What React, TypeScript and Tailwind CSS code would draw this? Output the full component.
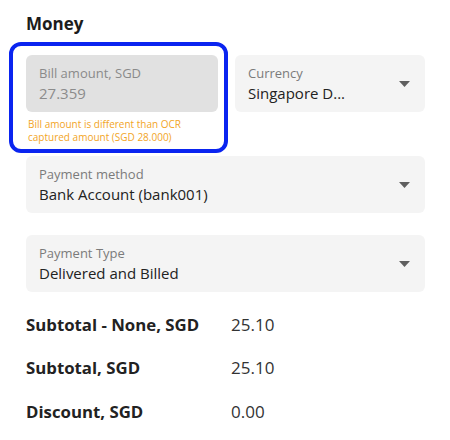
import React from 'react';

const font = { fontFamily: '"Open Sans", "Noto Sans", sans-serif' };

function Caret() {
  return (
    <svg width="11" height="6" viewBox="0 0 11 6" className="shrink-0">
      <path d="M0 0 L11 0 L5.5 6 Z" fill="#5f5f5f" />
    </svg>
  );
}

function SelectField({ label, value }: { label: string; value: string }) {
  return (
    <div className="flex items-center justify-between rounded-md bg-[#f4f4f4] pl-[13px] pr-[15px] h-[57px]">
      <div className="flex flex-col min-w-0">
        <span className="text-[13px] leading-[18px] text-[#7b7b7b]">{label}</span>
        <span className="text-[15px] leading-[22px] text-[#222222] truncate">{value}</span>
      </div>
      <Caret />
    </div>
  );
}

const totals = [
  { label: 'Subtotal - None, SGD', value: '25.10' },
  { label: 'Subtotal, SGD', value: '25.10' },
  { label: 'Discount, SGD', value: '0.00' },
];

export default function App() {
  return (
    <div className="w-[450px] h-[440px] bg-white overflow-hidden pt-[13px] pl-[26px] pr-[25px]" style={font}>
      <h2 className="text-[17px] leading-[22px] font-bold text-[#1c1c1c]">Money</h2>

      {/* Bill amount + currency */}
      <div className="grid grid-cols-[192px_190px] gap-x-[17px] mt-[20px]">
        <div className="relative">
          <div className="rounded-md bg-[#e1e1e1] pl-[13px] h-[57px] flex flex-col justify-center">
            <span className="text-[13px] leading-[18px] text-[#8a8a8a]">Bill amount, SGD</span>
            <span className="text-[15px] leading-[22px] text-[#8c8c8c]">27.359</span>
          </div>
          <p className="mt-[6px] pl-[2px] text-[10px] leading-[13px] text-[#f2a51f]">
            Bill amount is different than OCR captured amount (SGD 28.000)
          </p>
          {/* highlight annotation */}
          <div className="absolute left-[-17px] top-[-13px] w-[219px] h-[111px] rounded-[12px] border-4 border-[#0a24f0] pointer-events-none" />
        </div>
        <SelectField label="Currency" value="Singapore D..." />
      </div>

      <div className="mt-[12px]">
        <SelectField label="Payment method" value="Bank Account (bank001)" />
      </div>
      <div className="mt-[22px]">
        <SelectField label="Payment Type" value="Delivered and Billed" />
      </div>

      {/* Totals */}
      <div className="mt-[21px] flex flex-col gap-[20.5px]">
        {totals.map(t => (
          <div key={t.label} className="flex items-center h-[23px]">
            <span className="w-[205px] text-[16.8px] font-bold text-[#222222]">{t.label}</span>
            <span className="text-[17px] text-[#333333]">{t.value}</span>
          </div>
        ))}
      </div>
    </div>
  );
}
